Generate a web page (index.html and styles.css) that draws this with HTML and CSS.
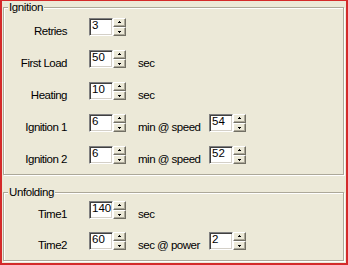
FILE: index.html
```html
<!DOCTYPE html>
<html>
<head>
<meta charset="utf-8">
<link rel="stylesheet" href="styles.css">
</head>
<body>
<div class="frame">
  <fieldset class="group">
    <legend>Ignition</legend>
    <div class="rows">
      <div class="row">
        <span class="lbl">Retries</span>
        <span class="spin"><span class="edit">3</span><span class="btns"><span class="btn"><svg width="5" height="3" viewBox="0 0 5 3"><path d="M2 0h1v1H2zM1 1h3v1H1z"/></svg></span><span class="btn"><svg width="5" height="3" viewBox="0 0 5 3"><path d="M1 1h3v1H1zM2 2h1v1H2z"/></svg></span></span></span>
      </div>
      <div class="row">
        <span class="lbl">First Load</span>
        <span class="spin"><span class="edit">50</span><span class="btns"><span class="btn"><svg width="5" height="3" viewBox="0 0 5 3"><path d="M2 0h1v1H2zM1 1h3v1H1z"/></svg></span><span class="btn"><svg width="5" height="3" viewBox="0 0 5 3"><path d="M1 1h3v1H1zM2 2h1v1H2z"/></svg></span></span></span>
        <span class="unit">sec</span>
      </div>
      <div class="row">
        <span class="lbl">Heating</span>
        <span class="spin"><span class="edit">10</span><span class="btns"><span class="btn"><svg width="5" height="3" viewBox="0 0 5 3"><path d="M2 0h1v1H2zM1 1h3v1H1z"/></svg></span><span class="btn"><svg width="5" height="3" viewBox="0 0 5 3"><path d="M1 1h3v1H1zM2 2h1v1H2z"/></svg></span></span></span>
        <span class="unit">sec</span>
      </div>
      <div class="row">
        <span class="lbl">Ignition 1</span>
        <span class="spin"><span class="edit">6</span><span class="btns"><span class="btn"><svg width="5" height="3" viewBox="0 0 5 3"><path d="M2 0h1v1H2zM1 1h3v1H1z"/></svg></span><span class="btn"><svg width="5" height="3" viewBox="0 0 5 3"><path d="M1 1h3v1H1zM2 2h1v1H2z"/></svg></span></span></span>
        <span class="unit">min @ speed</span>
        <span class="spin"><span class="edit">54</span><span class="btns"><span class="btn"><svg width="5" height="3" viewBox="0 0 5 3"><path d="M2 0h1v1H2zM1 1h3v1H1z"/></svg></span><span class="btn"><svg width="5" height="3" viewBox="0 0 5 3"><path d="M1 1h3v1H1zM2 2h1v1H2z"/></svg></span></span></span>
      </div>
      <div class="row">
        <span class="lbl">Ignition 2</span>
        <span class="spin"><span class="edit">6</span><span class="btns"><span class="btn"><svg width="5" height="3" viewBox="0 0 5 3"><path d="M2 0h1v1H2zM1 1h3v1H1z"/></svg></span><span class="btn"><svg width="5" height="3" viewBox="0 0 5 3"><path d="M1 1h3v1H1zM2 2h1v1H2z"/></svg></span></span></span>
        <span class="unit">min @ speed</span>
        <span class="spin"><span class="edit">52</span><span class="btns"><span class="btn"><svg width="5" height="3" viewBox="0 0 5 3"><path d="M2 0h1v1H2zM1 1h3v1H1z"/></svg></span><span class="btn"><svg width="5" height="3" viewBox="0 0 5 3"><path d="M1 1h3v1H1zM2 2h1v1H2z"/></svg></span></span></span>
      </div>
    </div>
  </fieldset>
  <fieldset class="group unfold">
    <legend>Unfolding</legend>
    <div class="rows">
      <div class="row">
        <span class="lbl">Time1</span>
        <span class="spin"><span class="edit">140</span><span class="btns"><span class="btn"><svg width="5" height="3" viewBox="0 0 5 3"><path d="M2 0h1v1H2zM1 1h3v1H1z"/></svg></span><span class="btn"><svg width="5" height="3" viewBox="0 0 5 3"><path d="M1 1h3v1H1zM2 2h1v1H2z"/></svg></span></span></span>
        <span class="unit">sec</span>
      </div>
      <div class="row">
        <span class="lbl">Time2</span>
        <span class="spin"><span class="edit">60</span><span class="btns"><span class="btn"><svg width="5" height="3" viewBox="0 0 5 3"><path d="M2 0h1v1H2zM1 1h3v1H1z"/></svg></span><span class="btn"><svg width="5" height="3" viewBox="0 0 5 3"><path d="M1 1h3v1H1zM2 2h1v1H2z"/></svg></span></span></span>
        <span class="unit">sec @ power</span>
        <span class="spin"><span class="edit">2</span><span class="btns"><span class="btn"><svg width="5" height="3" viewBox="0 0 5 3"><path d="M2 0h1v1H2zM1 1h3v1H1z"/></svg></span><span class="btn"><svg width="5" height="3" viewBox="0 0 5 3"><path d="M1 1h3v1H1zM2 2h1v1H2z"/></svg></span></span></span>
      </div>
    </div>
  </fieldset>
</div>
</body>
</html>
```

FILE: styles.css
```css
html, body {
  margin: 0;
  padding: 0;
  background: #ECE9D8;
}
body {
  font-family: "Liberation Sans", Arial, sans-serif;
  font-size: 11.5px;
  color: #000;
}
.frame {
  box-sizing: border-box;
  width: 348px;
  height: 265px;
  border: 2px solid #D42A2A;
  border-top-width: 1px;
  background: #ECE9D8;
  overflow: hidden;
}
.group {
  margin: 0 2px 0 1px;
  padding: 5px 0 10px 0;
  border: 1px solid #ACA899;
  box-shadow: 1px 1px 0 #fff, inset 1px 1px 0 #fff;
  min-width: 0;
}
.group legend {
  margin-left: 4px;
  padding: 0 1px;
  line-height: 12px;
  letter-spacing: -0.4px;
  background: #ECE9D8;
}
.unfold {
  margin-top: 11px;
  padding-top: 3px;
}
.rows {
  display: flex;
  flex-direction: column;
  gap: 14px;
}
.unfold .rows {
  gap: 13px;
}
.row {
  display: flex;
  align-items: flex-end;
  height: 18px;
}
.lbl {
  width: 63px;
  margin-right: 22px;
  margin-bottom: -1px;
  text-align: right;
  line-height: 12px;
  letter-spacing: -0.5px;
  white-space: nowrap;
}
.unit {
  width: 71px;
  margin-left: 12px;
  margin-bottom: -1px;
  line-height: 12px;
  letter-spacing: -0.5px;
  white-space: nowrap;
}
.spin {
  display: flex;
  height: 18px;
}
.edit {
  box-sizing: border-box;
  width: 24px;
  height: 18px;
  background: #fff;
  border: 1px solid;
  border-color: #808080 #fff #fff #808080;
  box-shadow: inset 1px 1px 0 #404040, inset -1px -1px 0 #D4D0C8;
  padding: 1px 0 0 2px;
  line-height: 10px;
  white-space: nowrap;
}
.btns {
  display: flex;
  flex-direction: column;
  width: 13px;
}
.btn {
  box-sizing: border-box;
  height: 9px;
  background: #ECE9D8;
  border: 1px solid;
  border-color: #fff #716F64 #716F64 #fff;
  box-shadow: inset -1px -1px 0 #ACA899;
  display: flex;
  align-items: center;
  justify-content: center;
}
.btn svg {
  display: block;
  shape-rendering: crispEdges;
}
```
